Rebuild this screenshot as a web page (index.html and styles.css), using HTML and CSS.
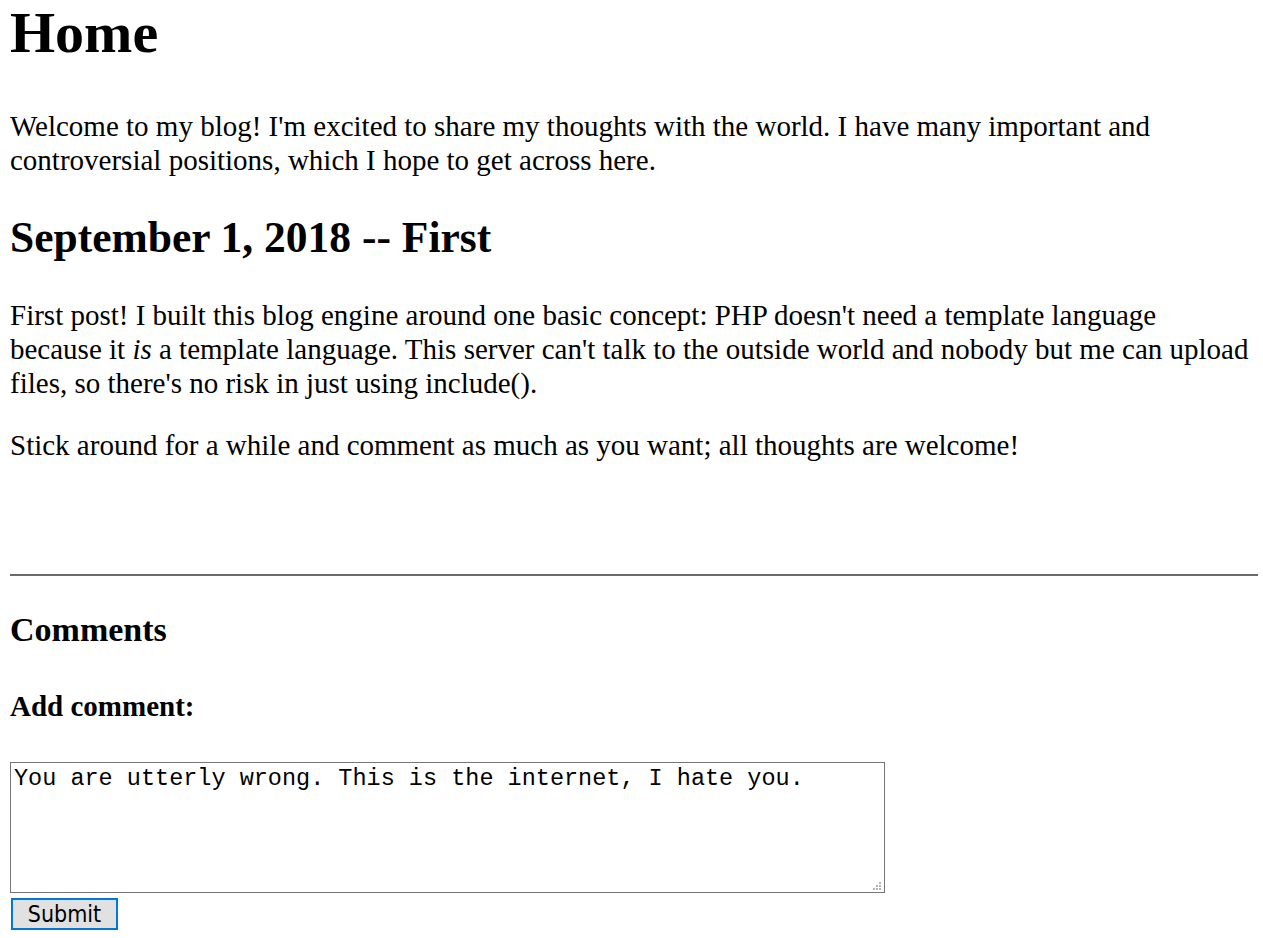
FILE: index.html
```html
<!DOCTYPE html>
<html>
<head>
<meta charset="utf-8">
<title>Home</title>
<link rel="stylesheet" href="styles.css">
</head>
<body>
<h1 class="title">Home</h1>
<p class="text intro">Welcome to my blog! I'm excited to share my thoughts with the world. I have many important and controversial positions, which I hope to get across here.</p>
<h2 class="post-title">September 1, 2018 -- First</h2>
<div class="post-body">
<p class="text first">First post! I built this blog engine around one basic concept: PHP doesn't need a template language because it <em>is</em> a template language. This server can't talk to the outside world and nobody but me can upload files, so there's no risk in just using include().</p>
<p class="text">Stick around for a while and comment as much as you want; all thoughts are welcome!</p>
</div>
<hr class="divider">
<h3 class="comments-title">Comments</h3>
<form class="comment-form">
<h4 class="add-title">Add comment:</h4>
<div class="box-wrap">
<textarea class="comment-box">You are utterly wrong. This is the internet, I hate you.</textarea>
<svg class="grip" width="9" height="9" viewBox="0 0 9 9" aria-hidden="true">
<rect x="6" y="0" width="2" height="2"/>
<rect x="3" y="3" width="2" height="2"/>
<rect x="6" y="3" width="2" height="2"/>
<rect x="0" y="6" width="2" height="2"/>
<rect x="3" y="6" width="2" height="2"/>
<rect x="6" y="6" width="2" height="2"/>
</svg>
</div>
<div class="actions"><button type="button" class="submit">Submit</button></div>
</form>
</body>
</html>
```
FILE: styles.css
```css
html, body {
  background: #fff;
}
body {
  margin: 0 5px 0 10px;
  font-family: "Liberation Serif", "Times New Roman", serif;
  font-size: 29px;
  line-height: 34px;
  color: #000;
}
.title {
  font-size: 58px;
  line-height: 66px;
  margin: 0;
  font-weight: bold;
}
.text {
  margin: 28px 0 0 0;
}
.intro {
  margin-top: 43px;
}
.post-title {
  font-size: 43.5px;
  line-height: 50px;
  margin: 35px 0 0 0;
}
.post-body {
  margin-right: 4px;
}
.text.first {
  margin-top: 36px;
}
.divider {
  margin: 112px 0 0 0;
  border: 0;
  border-top: 2px solid #6a6a6a;
  height: 0;
}
.comments-title {
  font-size: 34px;
  line-height: 40px;
  margin: 34px 0 0 0;
}
.add-title {
  font-size: 29px;
  line-height: 34px;
  margin: 39px 0 0 0;
}
.box-wrap {
  position: relative;
  width: 875px;
  margin-top: 39px;
}
.comment-box {
  display: block;
  box-sizing: border-box;
  width: 875px;
  height: 131px;
  margin: 0;
  padding: 2px 3px;
  border: 1px solid #767676;
  font-family: "Liberation Mono", "Courier New", monospace;
  font-size: 23.5px;
  line-height: 28px;
  color: #000;
  resize: none;
  outline: none;
}
.grip {
  position: absolute;
  right: 3px;
  bottom: 2px;
  fill: #b4b4b4;
}
.actions {
  margin-top: 5px;
  line-height: 0;
}
.submit {
  margin-left: 1px;
  box-sizing: border-box;
  width: 107px;
  height: 32px;
  padding: 0;
  border: 2px solid #0078d7;
  background: #e1e1e1;
  font-family: "DejaVu Sans Condensed", "DejaVu Sans", Tahoma, sans-serif;
  font-size: 23px;
  line-height: 28px;
  color: #000;
}
```
